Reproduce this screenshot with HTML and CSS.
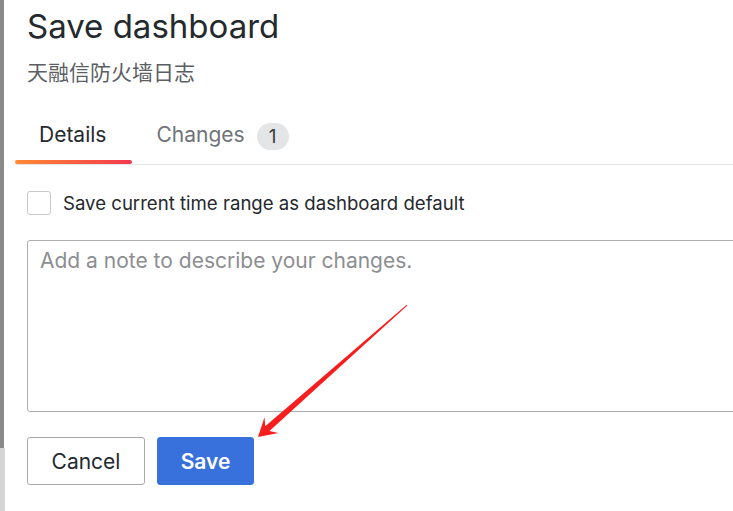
FILE: index.html
```html
<!DOCTYPE html>
<html lang="en">
<head>
<meta charset="utf-8">
<title>Save dashboard</title>
<link rel="stylesheet" href="styles.css">
</head>
<body>
<div class="page">
  <div class="edge">
    <div class="edge-dark"></div>
    <div class="edge-light"></div>
  </div>
  <main class="content">
    <h1 class="title">Save dashboard</h1>
    <div class="subtitle">天融信防火墙日志</div>
    <nav class="tabs">
      <div class="tab tab-active">Details</div>
      <div class="tab">Changes <span class="badge">1</span></div>
    </nav>
    <label class="check-row">
      <span class="checkbox"></span>
      <span class="check-label">Save current time range as dashboard default</span>
    </label>
    <div class="note">
      <span class="placeholder">Add a note to describe your changes.</span>
    </div>
    <div class="actions">
      <button class="btn btn-secondary">Cancel</button>
      <button class="btn btn-primary">Save</button>
    </div>
  </main>
  <svg class="arrow" width="733" height="511" viewBox="0 0 733 511">
    <g transform="translate(258 437) rotate(-41.5)">
      <polygon points="0,0 18,10.5 12.5,3.2 199,0.5 199,-0.5 12.5,-3.2 18,-10.5" fill="#f91d1d"/>
    </g>
  </svg>
</div>
</body>
</html>
```
FILE: styles.css
```css
html, body {
  margin: 0;
  padding: 0;
  background: #ffffff;
}
body {
  width: 733px;
  height: 511px;
  overflow: hidden;
  font-family: Inter, "Noto Sans", "Noto Sans CJK SC", sans-serif;
  color: #24292e;
}
.page {
  position: relative;
  display: flex;
  height: 511px;
  overflow: hidden;
}
.edge {
  width: 5px;
  display: flex;
  flex-direction: column;
  flex-shrink: 0;
}
.edge-dark {
  width: 4px;
  height: 448px;
  background: #8a8a8a;
}
.edge-light {
  width: 5px;
  flex: 1;
  background: #d5d5d5;
}
.content {
  flex: 1;
  min-width: 0;
  padding: 6px 0 0 22px;
  display: flex;
  flex-direction: column;
  align-items: flex-start;
  overflow: hidden;
}
.title {
  margin: 0;
  font-size: 33px;
  line-height: 40px;
  font-weight: 400;
  color: #24292e;
}
.subtitle {
  margin-top: 11px;
  font-family: "Noto Sans CJK SC", sans-serif;
  font-size: 21px;
  line-height: 28px;
  color: #5b5e62;
}
.tabs {
  margin-top: 28px;
  margin-left: -12px;
  align-self: stretch;
  display: flex;
  border-bottom: 1px solid #e6e6e6;
}
.tab {
  position: relative;
  padding: 10px 25px 17px 24px;
  font-size: 21px;
  line-height: 24px;
  height: 24px;
  color: #707378;
  display: flex;
  align-items: center;
  gap: 12px;
}
.tab-active {
  padding-right: 26px;
  color: #24292e;
}
.tab-active::after {
  content: "";
  position: absolute;
  left: 0;
  right: 0;
  bottom: 0;
  height: 4px;
  border-radius: 2px;
  background: linear-gradient(90deg, #ff8a33, #f2394f);
}
.badge {
  display: inline-flex;
  align-items: center;
  justify-content: center;
  width: 32px;
  height: 27px;
  margin: 0 0 -3px;
  border-radius: 14px;
  background: #e4e5e6;
  color: #3b3e42;
  font-size: 19px;
}
.check-row {
  margin-top: 26px;
  display: flex;
  align-items: center;
  gap: 12px;
}
.checkbox {
  width: 22px;
  height: 22px;
  border: 1px solid #c9c9c9;
  border-radius: 3px;
  background: #fff;
}
.check-label {
  font-size: 18.6px;
  line-height: 22px;
  font-weight: 400;
  color: #24292e;
}
.note {
  margin-top: 25px;
  width: 760px;
  height: 172px;
  flex-shrink: 0;
  box-sizing: border-box;
  border: 1px solid #adadad;
  border-radius: 3px;
  padding: 8px 12px;
}
.placeholder {
  font-size: 21px;
  line-height: 24px;
  color: #8c8e91;
}
.actions {
  margin-top: 25px;
  display: flex;
  gap: 12px;
}
.btn {
  height: 48px;
  box-sizing: border-box;
  border-radius: 3px;
  font-family: Inter, sans-serif;
  font-size: 21px;
  padding: 0;
}
.btn-secondary {
  width: 118px;
  background: #fff;
  border: 1px solid #a9a9a9;
  color: #24292e;
  font-weight: 400;
}
.btn-primary {
  width: 97px;
  background: #3871dc;
  border: 1px solid #3871dc;
  color: #fff;
  font-weight: 600;
}
.arrow {
  position: absolute;
  left: 0;
  top: 0;
  pointer-events: none;
}
```
